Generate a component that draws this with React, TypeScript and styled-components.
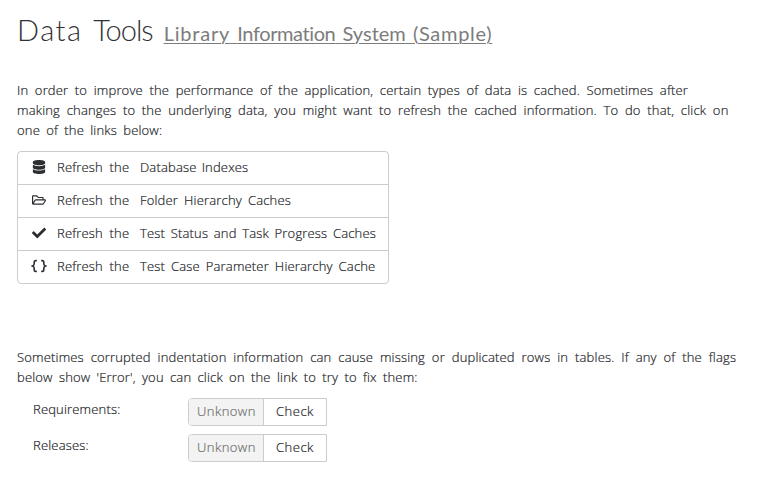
import React from 'react';
import styled, { createGlobalStyle } from 'styled-components';
import { FaCheck, FaDatabase, FaRegFolderOpen } from 'react-icons/fa';

const GlobalStyle = createGlobalStyle`
  *, *::before, *::after { box-sizing: border-box; }
  body {
    margin: 0;
    background: #fff;
    color: #222428;
    font: 300 13px/20px 'Open Sans', 'Noto Sans', sans-serif;
  }
`;

const Page = styled.main`
  padding: 12px 17px 0;
`;

const Title = styled.h1`
  display: flex;
  align-items: baseline;
  height: 36px;
  margin: 0 0 32px;
  font: 300 29px/36px Lato, sans-serif;
  color: #303236;
  white-space: nowrap;
`;

const Word = styled.span<{ $tracking: number }>`
  letter-spacing: ${p => p.$tracking}px;
`;

const Heading = styled.span`
  word-spacing: 3px;
`;

const ProductLink = styled.a`
  margin-left: 11px;
  font: 400 20px/30px Lato, sans-serif;
  color: #7c7c7c;
  text-decoration: underline;
  text-decoration-thickness: 1px;
  text-underline-offset: 2px;
  word-spacing: 2px;
`;

const Text = styled.p`
  margin: 0;
`;

const Line = styled.span<{ $gap?: number; $tracking?: number }>`
  display: block;
  white-space: nowrap;
  letter-spacing: ${p => p.$tracking ?? 0.17}px;
  word-spacing: ${p => p.$gap ?? 2.7}px;
  -webkit-text-stroke: 0.2px currentColor;
`;

const ActionList = styled.div`
  width: 372px;
  margin: 11px 0 63px;
  border: 1px solid #ccc;
  border-radius: 4px;
`;

const Action = styled.a`
  display: grid;
  grid-template-columns: 18px 75px 1fr;
  column-gap: 8px;
  height: 33px;
  padding: 5px 13px 0;
  & + & { border-top: 1px solid #ccc; }
  &:first-child { height: 32px; }
`;

const IconBox = styled.span`
  display: flex;
  align-items: center;
  justify-content: center;
  height: 20px;
  margin-left: -2px;
  color: #2c2e32;
  svg { height: 14px; width: auto; }
`;

const Field = styled.div`
  display: flex;
  height: 36px;
  padding-left: 16px;
`;

const Label = styled.div`
  width: 155px;
  padding-top: 1px;
`;

const Group = styled.div`
  display: flex;
  width: 139px;
  height: 28px;
  border: 1px solid #ccc;
  border-radius: 4px 0 0 4px;
  overflow: hidden;
`;

const Status = styled.div`
  width: 74px;
  padding: 2px 0 0 8px;
  background: #f3f3f3;
  color: #707070;
`;

const CheckButton = styled.button`
  flex: 1;
  padding: 2px 0 4px 12px;
  border: 0;
  border-left: 1px solid #ccc;
  background: #fff;
  color: inherit;
  font: inherit;
  text-align: left;
`;

const Fields = styled.section`
  margin-top: 11px;
`;

const Braces = () => (
  <svg viewBox="0 0 16 14" fill="none" stroke="currentColor" strokeWidth="1.6">
    <path d="M5.8 1.6H4.9Q3.2 1.6 3.2 3.3V5Q3.2 6.2 1.4 7Q3.2 7.8 3.2 9V10.7Q3.2 12.4 4.9 12.4H5.8" />
    <path d="M10.2 1.6H11.1Q12.8 1.6 12.8 3.3V5Q12.8 6.2 14.6 7Q12.8 7.8 12.8 9V10.7Q12.8 12.4 11.1 12.4H10.2" />
  </svg>
);

const actions = [
  { icon: <FaDatabase />, name: 'Database Indexes', gap: 1.6 },
  { icon: <FaRegFolderOpen />, name: 'Folder Hierarchy Caches', gap: 2.5 },
  { icon: <FaCheck />, name: 'Test Status and Task Progress Caches', gap: 2.1 },
  { icon: <Braces />, name: 'Test Case Parameter Hierarchy Cache', gap: 2.4 },
];

export default function App() {
  return (
    <>
      <GlobalStyle />
      <Page>
        <Title>
          <Heading><Word $tracking={1.5}>Data</Word> <Word $tracking={-1}>Tools</Word></Heading>
          <ProductLink>
            <Word $tracking={0.8}>Library</Word> <Word $tracking={-0.4}>Information</Word>{' '}
            <Word $tracking={0}>System</Word> <Word $tracking={0.7}>(Sample)</Word>
          </ProductLink>
        </Title>
        <Text>
          <Line $gap={3}>In order to improve the performance of the application, certain types of data is cached. Sometimes after</Line>
          <Line $gap={3.1}>making changes to the underlying data, you might want to refresh the cached information. To do that, click on</Line>
          <Line>one of the links below:</Line>
        </Text>
        <ActionList>
          {actions.map(a => (
            <Action key={a.name}>
              <IconBox>{a.icon}</IconBox>
              <Line $gap={3.1}>Refresh the</Line>
              <Line $gap={a.gap}>{a.name}</Line>
            </Action>
          ))}
        </ActionList>
        <Text>
          <Line $gap={3.3}>Sometimes corrupted indentation information can cause missing or duplicated rows in tables. If any of the flags</Line>
          <Line>below show 'Error', you can click on the link to try to fix them:</Line>
        </Text>
        <Fields>
          {['Requirements:', 'Releases:'].map(name => (
            <Field key={name}>
              <Label><Line>{name}</Line></Label>
              <Group>
                <Status><Line $tracking={0.45}>Unknown</Line></Status>
                <CheckButton><Line $tracking={0.5}>Check</Line></CheckButton>
              </Group>
            </Field>
          ))}
        </Fields>
      </Page>
    </>
  );
}
